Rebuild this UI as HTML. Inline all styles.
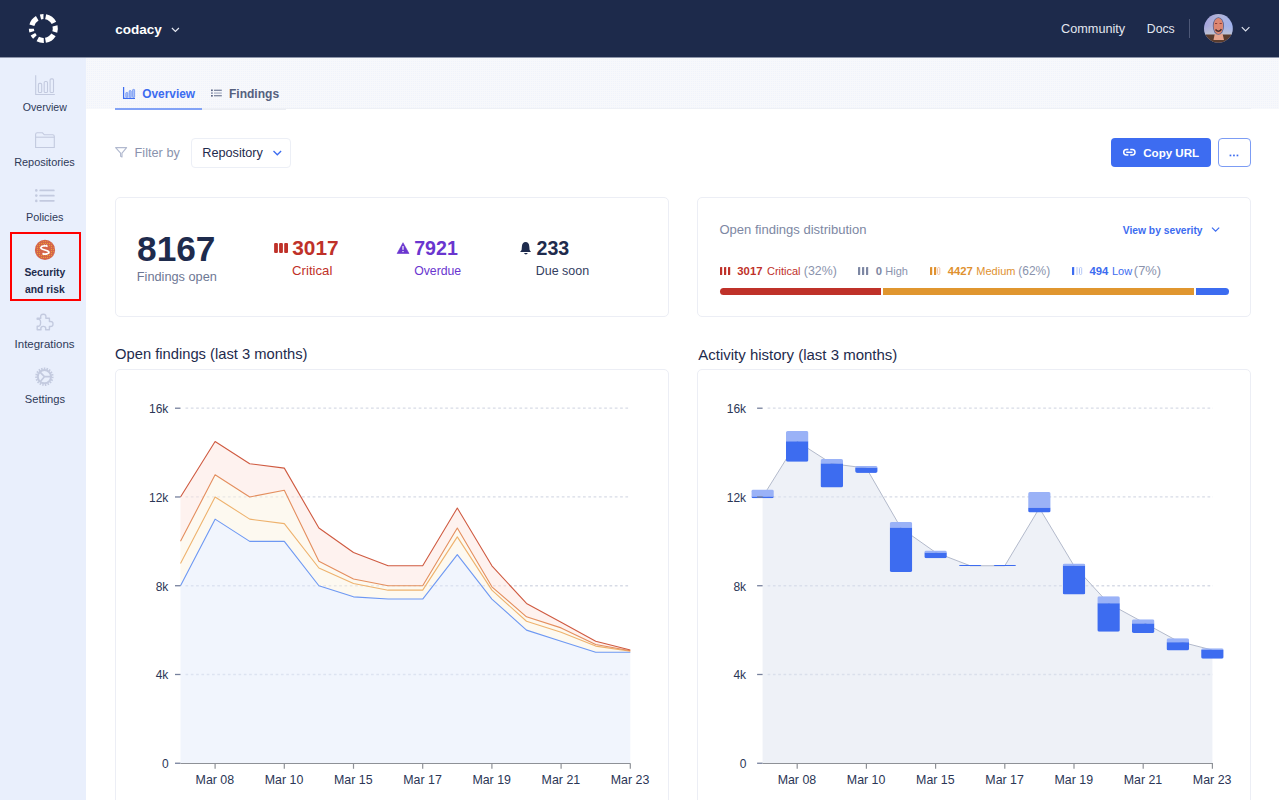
<!DOCTYPE html>
<html><head><meta charset="utf-8">
<style>
html,body{margin:0;padding:0;width:1279px;height:800px;overflow:hidden;background:#fff;font-family:"Liberation Sans",sans-serif;}
.a{position:absolute;white-space:nowrap;}
#hdr{position:absolute;left:0;top:0;width:1279px;height:57px;background:#1d2a4b;}
#side{position:absolute;left:0;top:58px;width:86px;height:742px;background:#e9effc;}
#tabs{position:absolute;left:86px;top:58px;width:1193px;height:50px;background-color:#f0f3fb;background-image:linear-gradient(90deg,#f7f8fb 1px,transparent 1px),linear-gradient(#f7f8fb 1px,transparent 1px);background-size:2px 2px;}
.card{position:absolute;border:1px solid #eceef5;border-radius:5px;background:#fff;box-sizing:border-box;}
</style></head><body>
<div id="hdr"></div><div class="a" style="left:0;top:57px;width:1279px;height:1px;background:#8d95ab;"></div>
<div id="side"></div>
<div id="tabs"></div><div class="a" style="left:86px;top:108px;width:1193px;height:1px;background:#f7f8fb;"></div><div class="a" style="left:115px;top:108px;width:1136px;height:1px;background:#eef0f5;"></div>
<svg class="a" style="left:0;top:0" width="90" height="57"><path d="M40.48 16.90A11.95 11.95 0 0 1 43.47 16.55M45.65 16.77A11.95 11.95 0 0 1 53.92 22.89M55.01 25.81A11.95 11.95 0 0 1 54.80 31.99M53.50 34.83A11.95 11.95 0 0 1 45.45 40.27M43.79 40.44A11.95 11.95 0 0 1 37.76 39.05M34.92 36.95A11.95 11.95 0 0 1 32.92 34.29M31.88 31.79A11.95 11.95 0 0 1 31.42 28.71M31.88 25.21A11.95 11.95 0 0 1 37.22 18.26" fill="none" stroke="#fff" stroke-width="5.1"/></svg>
<div class="a" style="left:115.26px;top:23px;font-size:13.53px;line-height:13.53px;font-weight:bold;color:#fff;">codacy</div>
<svg class="a" style="left:168px;top:25px" width="14" height="10"><path d="M3.9 3 L7.4 6.5 L10.9 3" fill="none" stroke="#e6e9f2" stroke-width="1.15"/></svg>
<div class="a" style="left:1061.07px;top:23px;font-size:12.69px;line-height:12.69px;font-weight:normal;color:#e3e7f0;">Community</div>
<div class="a" style="left:1146.82px;top:23px;font-size:12.24px;line-height:12.24px;font-weight:normal;color:#e3e7f0;">Docs</div>
<div class="a" style="left:1189px;top:19px;width:1px;height:19px;background:#4d5877;"></div>
<svg class="a" style="left:1204.3px;top:14px" width="29" height="29" viewBox="0 0 29 29">
<defs><clipPath id="av"><circle cx="14.4" cy="14.4" r="14.35"/></clipPath>
<linearGradient id="avg" x1="0" y1="0" x2="1" y2="0.3"><stop offset="0" stop-color="#a19fe0"/><stop offset="0.45" stop-color="#b2b4d6"/><stop offset="1" stop-color="#9fb2ee"/></linearGradient>
<linearGradient id="avg2" x1="0" y1="0" x2="0" y2="1"><stop offset="0" stop-color="#b9bdd6" stop-opacity="0"/><stop offset="1" stop-color="#bfc3d3"/></linearGradient></defs>
<g clip-path="url(#av)"><rect width="29" height="29" fill="url(#avg)"/>
<rect x="0" y="12" width="29" height="9" fill="url(#avg2)"/>
<path d="M0 20.5 L29 20.5 L29 29 L0 29Z" fill="#5a3c2e"/>
<path d="M10.8 19.5 L18.5 19.5 L20 26 L9.5 26Z" fill="#e6a48e"/>
<ellipse cx="14.4" cy="12" rx="5.6" ry="8.8" fill="#56628f"/>
<ellipse cx="14.4" cy="12" rx="4.8" ry="8" fill="#dc8670"/>
<path d="M11 9.5 H13.2 M15.6 9.5 H17.8" stroke="#8a3b35" stroke-width="1"/>
<path d="M11.5 15.5 Q14.4 19 17.5 15.2" stroke="#4b2c2c" stroke-width="1.5" fill="none"/>
</g></svg>
<svg class="a" style="left:1238px;top:24px" width="14" height="10"><path d="M3.8 3.2 L7.6 7 L11.4 3.2" fill="none" stroke="#dfe3ee" stroke-width="1.15"/></svg>
<svg class="a" style="left:30px;top:70px" width="30" height="30" viewBox="30 70 30 30" fill="none" stroke="#c3cadf" stroke-width="1">
<path d="M35.7 75.3 V94.5 H54.8" stroke-width="1.1"/><rect x="38.4" y="83.4" width="3.3" height="9.1" rx="1.1" stroke-width="1.1"/><rect x="44.2" y="81.5" width="3.3" height="11" rx="1.1" stroke-width="1.1"/><rect x="50.1" y="78.9" width="3.4" height="13.6" rx="1.1" stroke-width="1.1"/></svg>
<div class="a" style="left:22.83px;top:102px;font-size:10.55px;line-height:10.55px;font-weight:normal;color:#2e3958;">Overview</div>
<svg class="a" style="left:30px;top:128px" width="30" height="24" viewBox="30 128 30 24" fill="none" stroke="#c3cadf" stroke-width="1.1">
<path d="M35.6 147.5 V134.5 Q35.6 132.8 37.3 132.8 H42.5 L44.3 134.8 H52.6 Q54.3 134.8 54.3 136.5 V147.5 Z"/><path d="M35.6 137.2 H54.3"/></svg>
<div class="a" style="left:14.13px;top:157px;font-size:10.93px;line-height:10.93px;font-weight:normal;color:#2e3958;">Repositories</div>
<svg class="a" style="left:30px;top:184px" width="30" height="22" viewBox="30 184 30 22" fill="#c3cadf">
<circle cx="36.3" cy="190.4" r="1.3"/><circle cx="36.3" cy="195.6" r="1.3"/><circle cx="36.3" cy="200.9" r="1.3"/>
<rect x="39.3" y="189.6" width="15.4" height="1.7" rx="0.85"/><rect x="39.3" y="194.8" width="15.4" height="1.7" rx="0.85"/><rect x="39.3" y="200" width="15.4" height="1.7" rx="0.85"/></svg>
<div class="a" style="left:26.03px;top:212px;font-size:10.87px;line-height:10.87px;font-weight:normal;color:#2e3958;">Policies</div>
<div class="a" style="left:10px;top:232px;width:67px;height:65px;border:2px solid #f00;"></div>
<svg class="a" style="left:33px;top:238px" width="24" height="24" viewBox="33 238 24 24">
<defs><pattern id="sdots" x="0" y="0" width="2" height="2" patternUnits="userSpaceOnUse"><rect x="1" y="1" width="1" height="1" fill="#eda531"/></pattern></defs>
<circle cx="45" cy="249.9" r="10.1" fill="#d4644a"/>
<circle cx="45" cy="249.9" r="9" fill="url(#sdots)" fill-opacity="0.9"/>
<circle cx="45" cy="249.9" r="5.6" fill="#d4644a"/>
<path d="M47.6 246.4 Q44.6 245 41.6 246.6 Q39.6 248.2 42.6 249.3 L47.2 250.7 Q50.2 251.9 48.2 253.3 Q45.4 255 42.4 253.4" fill="none" stroke="#fff" stroke-width="1.7"/>
<path d="M44.4 244.6 V246.6 M46.6 244.6 V246.2 M43.8 252.8 V254.8 M46.2 253.2 V255" stroke="#fff" stroke-width="0.9"/>
</svg>
<div class="a" style="left:24.39px;top:268px;font-size:10.36px;line-height:10.36px;font-weight:bold;color:#1e2b4d;">Security</div>
<div class="a" style="left:24.99px;top:285px;font-size:10.37px;line-height:10.37px;font-weight:bold;color:#1e2b4d;">and risk</div>
<svg class="a" style="left:32px;top:309px" width="26" height="26" viewBox="32 309 26 26" fill="none" stroke="#c3cadf" stroke-width="1.4" stroke-linejoin="round">
<path d="M37.2 318.2 H40.8 Q40 314.2 43.3 314.2 Q46.6 314.2 45.8 318.2 H49.4 V321.6 Q53 320.8 53 324 Q53 327.2 49.4 326.4 V329.8 H45.6 Q46.4 326.4 43.3 326.4 Q40.2 326.4 41 329.8 H37.2 V326.2 Q40.6 327 40.6 322.4 Q40.6 318.6 37.2 319.2 Z"/></svg>
<div class="a" style="left:14.57px;top:339px;font-size:11.47px;line-height:11.47px;font-weight:normal;color:#2e3958;">Integrations</div>
<svg class="a" style="left:30px;top:362px" width="30" height="30" viewBox="30 362 30 30" fill="none" stroke="#c3cadf">
<circle cx="44.4" cy="376.7" r="8.2" stroke-width="2" stroke-dasharray="1.5 1.2"/>
<circle cx="44.4" cy="376.7" r="6.6" stroke-width="2"/>
<path d="M44.4 376.7 L39.8 371.8 M44.4 376.7 L50.6 376.7 M44.4 376.7 L40 382" stroke-width="1.7"/></svg>
<div class="a" style="left:24.80px;top:394px;font-size:11.17px;line-height:11.17px;font-weight:normal;color:#2e3958;">Settings</div>
<div class="a" style="left:115px;top:108.5px;width:171px;height:1.5px;background:#eceef3;"></div>
<div class="a" style="left:115px;top:108.4px;width:87px;height:1.6px;background:#83a3f6;"></div>
<svg class="a" style="left:120px;top:84px" width="18" height="18" viewBox="120 84 18 18" fill="none" stroke="#3c6cf0">
<path d="M123.6 87 V98.3 H135" stroke-width="1.25"/>
<rect x="125.8" y="92.5" width="2" height="4.8" fill="#b0c5f8" stroke="#6990f3" stroke-width="0.8" rx="0.6"/><rect x="129.2" y="90.6" width="2" height="6.7" fill="#b0c5f8" stroke="#6990f3" stroke-width="0.8" rx="0.6"/><rect x="132.6" y="89.4" width="2" height="7.9" fill="#b0c5f8" stroke="#6990f3" stroke-width="0.8" rx="0.6"/></svg>
<div class="a" style="left:142.22px;top:89px;font-size:11.90px;line-height:11.90px;font-weight:bold;color:#3c6cf0;">Overview</div>
<svg class="a" style="left:208px;top:86px" width="16" height="14" viewBox="208 86 16 14" fill="#5c6685">
<rect x="211" y="89.5" width="1.8" height="1.6"/><rect x="211" y="92.3" width="1.8" height="1.6" fill="#8a93ad"/><rect x="211" y="95" width="1.8" height="1.6"/>
<rect x="214" y="89.7" width="7.8" height="1.1" fill="#66708d"/><rect x="214" y="92.5" width="7.8" height="1.1" fill="#a0a8be"/><rect x="214" y="95.2" width="7.8" height="1.1" fill="#66708d"/></svg>
<div class="a" style="left:228.92px;top:88px;font-size:12.07px;line-height:12.07px;font-weight:bold;color:#55607e;">Findings</div>
<svg class="a" style="left:112px;top:144px" width="18" height="16" viewBox="112 144 18 16" fill="none" stroke="#b1b9cf" stroke-width="1.1" stroke-linejoin="round">
<path d="M115.6 147.6 H126.6 L122 153.2 V157 L120.6 156.2 V153.2 Z"/></svg>
<div class="a" style="left:134.58px;top:147px;font-size:12.72px;line-height:12.72px;font-weight:normal;color:#8a93ad;">Filter by</div>
<div class="card" style="left:191px;top:138px;width:100px;height:29.5px;border-radius:4px;border-color:#eceff6;"></div>
<div class="a" style="left:202.28px;top:147px;font-size:12.70px;line-height:12.70px;font-weight:normal;color:#1e2b4d;">Repository</div>
<svg class="a" style="left:270px;top:147px" width="14" height="12"><path d="M3.5 4 L7.3 7.8 L11.1 4" fill="none" stroke="#3c6cf0" stroke-width="1.3"/></svg>
<div class="a" style="left:1110.5px;top:138px;width:100px;height:28.5px;border-radius:4px;background:#3d6cf1;"></div>
<svg class="a" style="left:1120px;top:145px" width="18" height="14" viewBox="1120 145 18 14" fill="none" stroke="#fff" stroke-width="1.5">
<path d="M1128.4 149.5 H1126.3 Q1123.7 149.5 1123.7 152.3 Q1123.7 155 1126.3 155 H1128.4"/>
<path d="M1130.2 149.5 H1132.3 Q1135 149.5 1135 152.3 Q1135 155 1132.3 155 H1130.2"/>
<path d="M1126.2 152.3 H1132.5"/></svg>
<div class="a" style="left:1143.29px;top:148px;font-size:11.55px;line-height:11.55px;font-weight:bold;color:#fff;">Copy URL</div>
<div class="a" style="left:1218px;top:138.3px;width:33px;height:28.5px;box-sizing:border-box;border:1px solid #7c9cf4;border-radius:4px;"></div>
<svg class="a" style="left:1226px;top:150px" width="16" height="10" fill="#3c6cf0"><rect x="3.6" y="4.6" width="1.7" height="1.7"/><rect x="7.1" y="4.6" width="1.7" height="1.7"/><rect x="10.6" y="4.6" width="1.7" height="1.7"/></svg>
<div class="card" style="left:115px;top:197px;width:554px;height:120px;"></div>
<div class="a" style="left:137.04px;top:231px;font-size:35.27px;line-height:35.27px;font-weight:bold;color:#1e2b4d;">8167</div>
<div class="a" style="left:136.78px;top:271px;font-size:12.75px;line-height:12.75px;font-weight:normal;color:#6d7794;">Findings open</div>
<svg class="a" style="left:272px;top:240px" width="20" height="16" viewBox="272 240 20 16" fill="#bf3129"><rect x="274.1" y="242.9" width="3.8" height="10.2" rx="1"/><rect x="279.1" y="242.9" width="3.8" height="10.2" rx="1"/><rect x="284.2" y="242.9" width="3.8" height="10.2" rx="1"/></svg>
<div class="a" style="left:292.23px;top:238px;font-size:20.83px;line-height:20.83px;font-weight:bold;color:#bf3129;">3017</div>
<div class="a" style="left:292.09px;top:264px;font-size:13.18px;line-height:13.18px;font-weight:normal;color:#bf3129;">Critical</div>
<svg class="a" style="left:395px;top:240px" width="16" height="16" viewBox="395 240 16 16">
<path d="M403 242.7 L409 253.5 H397.1 Z" fill="#6a35cf" stroke="#6a35cf" stroke-width="0.6" stroke-linejoin="round"/>
<rect x="402.3" y="246" width="1.4" height="3.8" fill="#e4e0f2"/><rect x="402.3" y="251" width="1.4" height="1.1" fill="#e4e0f2"/></svg>
<div class="a" style="left:414.22px;top:239px;font-size:19.58px;line-height:19.58px;font-weight:bold;color:#6a35cf;">7921</div>
<div class="a" style="left:414.15px;top:265px;font-size:12.28px;line-height:12.28px;font-weight:normal;color:#6a35cf;">Overdue</div>
<svg class="a" style="left:518px;top:240px" width="16" height="16" viewBox="518 240 16 16" fill="#1e2b4d">
<path d="M525.6 242 Q529 242.2 529.3 246.5 L529.6 250 L531 251.9 H520.1 L521.6 250 L521.9 246.5 Q522.2 242.2 525.6 242 Z"/>
<path d="M524 253 H527.8 Q527.2 254.4 525.9 254.4 Q524.6 254.4 524 253 Z"/></svg>
<div class="a" style="left:536.51px;top:239px;font-size:19.62px;line-height:19.62px;font-weight:bold;color:#1e2b4d;">233</div>
<div class="a" style="left:535.70px;top:265px;font-size:12.48px;line-height:12.48px;font-weight:normal;color:#33405f;">Due soon</div>
<div class="card" style="left:697px;top:197px;width:554px;height:120px;"></div>
<div class="a" style="left:719.41px;top:223px;font-size:13.04px;line-height:13.04px;font-weight:normal;color:#7d87a3;">Open findings distribution</div>
<div class="a" style="left:1122.75px;top:226px;font-size:10.29px;line-height:10.29px;font-weight:bold;color:#3c6cf0;">View by severity</div>
<svg class="a" style="left:1208px;top:224px" width="14" height="12"><path d="M4 3.6 L7.6 7.2 L11.2 3.6" fill="none" stroke="#3c6cf0" stroke-width="1.2"/></svg>
<svg class="a" style="left:718px;top:265px" width="14" height="12" viewBox="718 265 14 12" fill="#bf3129"><rect x="720" y="267" width="2.2" height="8" rx="0.6"/><rect x="724" y="267" width="2.2" height="8" rx="0.6"/><rect x="728" y="267" width="2.2" height="8" rx="0.6"/></svg>
<div class="a" style="left:737.32px;top:266px;font-size:11.30px;line-height:11.30px;font-weight:bold;color:#bf3129;">3017</div>
<div class="a" style="left:766.95px;top:266px;font-size:11.00px;line-height:11.00px;font-weight:normal;color:#bf3129;">Critical</div>
<div class="a" style="left:803.86px;top:265px;font-size:12.34px;line-height:12.34px;font-weight:normal;color:#8a93ad;">(32%)</div>
<svg class="a" style="left:856px;top:265px" width="14" height="12" viewBox="856 265 14 12" fill="#7d87a3"><rect x="858" y="267" width="2.2" height="8" rx="0.6"/><rect x="862" y="267" width="2.2" height="8" rx="0.6"/><rect x="866" y="267" width="2.2" height="8" rx="0.6"/></svg>
<div class="a" style="left:875.85px;top:266px;font-size:11.30px;line-height:11.30px;font-weight:bold;color:#7d87a3;">0</div>
<div class="a" style="left:885.32px;top:266px;font-size:11.00px;line-height:11.00px;font-weight:normal;color:#8a93ad;">High</div>
<svg class="a" style="left:927px;top:265px" width="14" height="12" viewBox="927 265 14 12"><rect x="930" y="267" width="2.2" height="8" rx="0.6" fill="#e0912f"/><rect x="934" y="267" width="2.2" height="8" rx="0.6" fill="#e0912f"/><rect x="937.6" y="267.5" width="2.2" height="7" rx="1" fill="none" stroke="#f0c0a6" stroke-width="1"/></svg>
<div class="a" style="left:947.63px;top:266px;font-size:11.30px;line-height:11.30px;font-weight:bold;color:#e0912f;">4427</div>
<div class="a" style="left:976.32px;top:266px;font-size:11.00px;line-height:11.00px;font-weight:normal;color:#e0912f;">Medium</div>
<div class="a" style="left:1018.28px;top:266px;font-size:11.94px;line-height:11.94px;font-weight:normal;color:#8a93ad;">(62%)</div>
<svg class="a" style="left:1069px;top:265px" width="14" height="12" viewBox="1069 265 14 12"><rect x="1072" y="267" width="2.2" height="8" rx="0.6" fill="#3c6cf0"/><rect x="1076" y="267" width="2.2" height="8" fill="#dde5f9"/><rect x="1079.5" y="267.5" width="2.2" height="7" rx="1" fill="none" stroke="#b5c8f7" stroke-width="1"/></svg>
<div class="a" style="left:1089.53px;top:266px;font-size:11.30px;line-height:11.30px;font-weight:bold;color:#3c6cf0;">494</div>
<div class="a" style="left:1111.92px;top:266px;font-size:11.00px;line-height:11.00px;font-weight:normal;color:#3c6cf0;">Low</div>
<div class="a" style="left:1133.83px;top:265px;font-size:12.91px;line-height:12.91px;font-weight:normal;color:#8a93ad;">(7%)</div>
<div class="a" style="left:719.5px;top:287.6px;width:161.5px;height:7px;background:#bf3129;border-radius:3.5px 0 0 3.5px;"></div>
<div class="a" style="left:882.6px;top:287.6px;width:311.2px;height:7px;background:#e0962f;"></div>
<div class="a" style="left:1195.5px;top:287.6px;width:33.8px;height:7px;background:#3c6cf0;border-radius:0 3.5px 3.5px 0;"></div>
<div class="a" style="left:115.04px;top:347px;font-size:14.74px;line-height:14.74px;font-weight:normal;color:#1e2b4d;">Open findings (last 3 months)</div>
<div class="a" style="left:698.30px;top:347px;font-size:14.99px;line-height:14.99px;font-weight:normal;color:#1e2b4d;">Activity history (last 3 months)</div>
<div class="card" style="left:115px;top:369px;width:554px;height:460px;"></div>
<div class="card" style="left:697px;top:369px;width:554px;height:460px;"></div>
<svg class="a" style="left:0;top:0" width="1279" height="800"><line x1="185.5" y1="408.21" x2="630.5" y2="408.21" stroke="#d7dbe6" stroke-width="1.3" stroke-dasharray="2.7 2.6"/><line x1="185.5" y1="496.97" x2="630.5" y2="496.97" stroke="#d7dbe6" stroke-width="1.3" stroke-dasharray="2.7 2.6"/><line x1="185.5" y1="585.73" x2="630.5" y2="585.73" stroke="#d7dbe6" stroke-width="1.3" stroke-dasharray="2.7 2.6"/><line x1="185.5" y1="674.49" x2="630.5" y2="674.49" stroke="#d7dbe6" stroke-width="1.3" stroke-dasharray="2.7 2.6"/><polygon points="180.50,496.97 215.10,441.50 249.70,463.69 284.30,468.12 318.90,528.04 353.50,552.44 388.10,565.76 422.70,565.76 457.30,508.06 491.90,565.76 526.50,603.48 561.10,622.34 595.70,641.21 630.30,650.08 630.30,650.75 595.70,644.53 561.10,627.89 526.50,616.80 491.90,586.84 457.30,528.04 422.70,585.73 388.10,585.73 353.50,579.07 318.90,561.32 284.30,490.31 249.70,496.97 215.10,474.78 180.50,541.35" fill="#fde5df" fill-opacity="0.5"/><polygon points="180.50,541.35 215.10,474.78 249.70,496.97 284.30,490.31 318.90,561.32 353.50,579.07 388.10,585.73 422.70,585.73 457.30,528.04 491.90,586.84 526.50,616.80 561.10,627.89 595.70,644.53 630.30,650.75 630.30,651.19 595.70,646.09 561.10,632.33 526.50,621.23 491.90,590.17 457.30,536.91 422.70,590.17 388.10,590.17 353.50,583.51 318.90,567.98 284.30,523.60 249.70,519.16 215.10,496.97 180.50,563.54" fill="#fbf3e1" fill-opacity="0.5"/><polygon points="180.50,563.54 215.10,496.97 249.70,519.16 284.30,523.60 318.90,567.98 353.50,583.51 388.10,590.17 422.70,590.17 457.30,536.91 491.90,590.17 526.50,621.23 561.10,632.33 595.70,646.09 630.30,651.19 630.30,652.30 595.70,652.30 561.10,641.21 526.50,630.11 491.90,599.04 457.30,554.66 422.70,599.04 388.10,599.04 353.50,596.83 318.90,585.73 284.30,541.35 249.70,541.35 215.10,519.16 180.50,585.73" fill="#fbf3e1" fill-opacity="0.5"/><polygon points="180.50,585.73 215.10,519.16 249.70,541.35 284.30,541.35 318.90,585.73 353.50,596.83 388.10,599.04 422.70,599.04 457.30,554.66 491.90,599.04 526.50,630.11 561.10,641.21 595.70,652.30 630.30,652.30 630.30,763.25 595.70,763.25 561.10,763.25 526.50,763.25 491.90,763.25 457.30,763.25 422.70,763.25 388.10,763.25 353.50,763.25 318.90,763.25 284.30,763.25 249.70,763.25 215.10,763.25 180.50,763.25" fill="#e3ebfb" fill-opacity="0.5"/><polyline points="180.50,585.73 215.10,519.16 249.70,541.35 284.30,541.35 318.90,585.73 353.50,596.83 388.10,599.04 422.70,599.04 457.30,554.66 491.90,599.04 526.50,630.11 561.10,641.21 595.70,652.30 630.30,652.30" fill="none" stroke="#6d98f3" stroke-width="1.1" stroke-linejoin="round"/><polyline points="180.50,563.54 215.10,496.97 249.70,519.16 284.30,523.60 318.90,567.98 353.50,583.51 388.10,590.17 422.70,590.17 457.30,536.91 491.90,590.17 526.50,621.23 561.10,632.33 595.70,646.09 630.30,651.19" fill="none" stroke="#eeb26d" stroke-width="1.1" stroke-linejoin="round"/><polyline points="180.50,541.35 215.10,474.78 249.70,496.97 284.30,490.31 318.90,561.32 353.50,579.07 388.10,585.73 422.70,585.73 457.30,528.04 491.90,586.84 526.50,616.80 561.10,627.89 595.70,644.53 630.30,650.75" fill="none" stroke="#e48e5e" stroke-width="1.1" stroke-linejoin="round"/><polyline points="180.50,496.97 215.10,441.50 249.70,463.69 284.30,468.12 318.90,528.04 353.50,552.44 388.10,565.76 422.70,565.76 457.30,508.06 491.90,565.76 526.50,603.48 561.10,622.34 595.70,641.21 630.30,650.08" fill="none" stroke="#cf5a40" stroke-width="1.1" stroke-linejoin="round"/><line x1="175.0" y1="408.21" x2="180.5" y2="408.21" stroke="#76809c" stroke-width="1.3"/><line x1="175.0" y1="496.97" x2="180.5" y2="496.97" stroke="#76809c" stroke-width="1.3"/><line x1="175.0" y1="585.73" x2="180.5" y2="585.73" stroke="#76809c" stroke-width="1.3"/><line x1="175.0" y1="674.49" x2="180.5" y2="674.49" stroke="#76809c" stroke-width="1.3"/><line x1="175.0" y1="763.25" x2="180.5" y2="763.25" stroke="#76809c" stroke-width="1.3"/><line x1="180.5" y1="763.5" x2="630.5" y2="763.5" stroke="#8e9197" stroke-width="1.1"/><line x1="215.10" y1="763.5" x2="215.10" y2="768.8" stroke="#8e9197" stroke-width="1.2"/><line x1="284.30" y1="763.5" x2="284.30" y2="768.8" stroke="#8e9197" stroke-width="1.2"/><line x1="353.50" y1="763.5" x2="353.50" y2="768.8" stroke="#8e9197" stroke-width="1.2"/><line x1="422.70" y1="763.5" x2="422.70" y2="768.8" stroke="#8e9197" stroke-width="1.2"/><line x1="491.90" y1="763.5" x2="491.90" y2="768.8" stroke="#8e9197" stroke-width="1.2"/><line x1="561.10" y1="763.5" x2="561.10" y2="768.8" stroke="#8e9197" stroke-width="1.2"/><line x1="630.30" y1="763.5" x2="630.30" y2="768.8" stroke="#8e9197" stroke-width="1.2"/><line x1="767.6" y1="408.21" x2="1213" y2="408.21" stroke="#d7dbe6" stroke-width="1.3" stroke-dasharray="2.7 2.6"/><line x1="767.6" y1="496.97" x2="1213" y2="496.97" stroke="#d7dbe6" stroke-width="1.3" stroke-dasharray="2.7 2.6"/><line x1="767.6" y1="585.73" x2="1213" y2="585.73" stroke="#d7dbe6" stroke-width="1.3" stroke-dasharray="2.7 2.6"/><line x1="767.6" y1="674.49" x2="1213" y2="674.49" stroke="#d7dbe6" stroke-width="1.3" stroke-dasharray="2.7 2.6"/><polygon points="762.60,496.97 797.20,441.50 831.80,463.69 866.40,468.12 901.00,528.04 935.60,552.44 970.20,565.76 1004.80,565.76 1039.40,508.06 1074.00,565.76 1108.60,603.48 1143.20,622.34 1177.80,641.21 1212.40,650.08 1212.40,763.25 1177.80,763.25 1143.20,763.25 1108.60,763.25 1074.00,763.25 1039.40,763.25 1004.80,763.25 970.20,763.25 935.60,763.25 901.00,763.25 866.40,763.25 831.80,763.25 797.20,763.25 762.60,763.25" fill="#dde3ef" fill-opacity="0.5"/><polyline points="762.60,496.97 797.20,441.50 831.80,463.69 866.40,468.12 901.00,528.04 935.60,552.44 970.20,565.76 1004.80,565.76 1039.40,508.06 1074.00,565.76 1108.60,603.48 1143.20,622.34 1177.80,641.21 1212.40,650.08" fill="none" stroke="#b3bacb" stroke-width="1" stroke-linejoin="round"/><defs><clipPath id="bc0"><rect x="751.35" y="489.5" width="22.5" height="8.80" rx="1.8"/></clipPath><clipPath id="bc1"><rect x="785.95" y="431" width="22.5" height="30.80" rx="1.8"/></clipPath><clipPath id="bc2"><rect x="820.55" y="459" width="22.5" height="28.50" rx="1.8"/></clipPath><clipPath id="bc3"><rect x="855.15" y="466" width="22.5" height="6.90" rx="1.8"/></clipPath><clipPath id="bc4"><rect x="889.75" y="522" width="22.5" height="50.00" rx="1.8"/></clipPath><clipPath id="bc5"><rect x="924.35" y="550.5" width="22.5" height="7.80" rx="1.8"/></clipPath><clipPath id="bc6"><rect x="958.95" y="565" width="22.5" height="1.00" rx="1.8"/></clipPath><clipPath id="bc7"><rect x="993.55" y="565" width="22.5" height="1.00" rx="1.8"/></clipPath><clipPath id="bc8"><rect x="1028.15" y="492" width="22.5" height="20.50" rx="1.8"/></clipPath><clipPath id="bc9"><rect x="1062.75" y="563.5" width="22.5" height="31.00" rx="1.8"/></clipPath><clipPath id="bc10"><rect x="1097.35" y="596.2" width="22.5" height="35.55" rx="1.8"/></clipPath><clipPath id="bc11"><rect x="1131.95" y="619.3" width="22.5" height="13.70" rx="1.8"/></clipPath><clipPath id="bc12"><rect x="1166.55" y="638.2" width="22.5" height="12.30" rx="1.8"/></clipPath><clipPath id="bc13"><rect x="1201.15" y="648.25" width="22.5" height="10.50" rx="1.8"/></clipPath></defs><g clip-path="url(#bc0)"><rect x="751.35" y="489.5" width="22.5" height="7.10" fill="#9ab2f7"/><rect x="751.35" y="496.6" width="22.5" height="1.70" fill="#3d6cf0"/></g><g clip-path="url(#bc1)"><rect x="785.95" y="431" width="22.5" height="10.30" fill="#9ab2f7"/><rect x="785.95" y="441.3" width="22.5" height="20.50" fill="#3d6cf0"/></g><g clip-path="url(#bc2)"><rect x="820.55" y="459" width="22.5" height="4.50" fill="#9ab2f7"/><rect x="820.55" y="463.5" width="22.5" height="24.00" fill="#3d6cf0"/></g><g clip-path="url(#bc3)"><rect x="855.15" y="466" width="22.5" height="1.80" fill="#9ab2f7"/><rect x="855.15" y="467.8" width="22.5" height="5.10" fill="#3d6cf0"/></g><g clip-path="url(#bc4)"><rect x="889.75" y="522" width="22.5" height="5.70" fill="#9ab2f7"/><rect x="889.75" y="527.7" width="22.5" height="44.30" fill="#3d6cf0"/></g><g clip-path="url(#bc5)"><rect x="924.35" y="550.5" width="22.5" height="2.25" fill="#9ab2f7"/><rect x="924.35" y="552.75" width="22.5" height="5.55" fill="#3d6cf0"/></g><g clip-path="url(#bc6)"><rect x="958.95" y="565" width="22.5" height="0.00" fill="#9ab2f7"/><rect x="958.95" y="565" width="22.5" height="1.00" fill="#3d6cf0"/></g><g clip-path="url(#bc7)"><rect x="993.55" y="565" width="22.5" height="0.00" fill="#9ab2f7"/><rect x="993.55" y="565" width="22.5" height="1.00" fill="#3d6cf0"/></g><g clip-path="url(#bc8)"><rect x="1028.15" y="492" width="22.5" height="15.75" fill="#9ab2f7"/><rect x="1028.15" y="507.75" width="22.5" height="4.75" fill="#3d6cf0"/></g><g clip-path="url(#bc9)"><rect x="1062.75" y="563.5" width="22.5" height="2.25" fill="#9ab2f7"/><rect x="1062.75" y="565.75" width="22.5" height="28.75" fill="#3d6cf0"/></g><g clip-path="url(#bc10)"><rect x="1097.35" y="596.2" width="22.5" height="7.05" fill="#9ab2f7"/><rect x="1097.35" y="603.25" width="22.5" height="28.50" fill="#3d6cf0"/></g><g clip-path="url(#bc11)"><rect x="1131.95" y="619.3" width="22.5" height="4.20" fill="#9ab2f7"/><rect x="1131.95" y="623.5" width="22.5" height="9.50" fill="#3d6cf0"/></g><g clip-path="url(#bc12)"><rect x="1166.55" y="638.2" width="22.5" height="4.05" fill="#9ab2f7"/><rect x="1166.55" y="642.25" width="22.5" height="8.25" fill="#3d6cf0"/></g><g clip-path="url(#bc13)"><rect x="1201.15" y="648.25" width="22.5" height="1.50" fill="#9ab2f7"/><rect x="1201.15" y="649.75" width="22.5" height="9.00" fill="#3d6cf0"/></g><line x1="757.1" y1="408.21" x2="762.6" y2="408.21" stroke="#76809c" stroke-width="1.3"/><line x1="757.1" y1="496.97" x2="762.6" y2="496.97" stroke="#76809c" stroke-width="1.3"/><line x1="757.1" y1="585.73" x2="762.6" y2="585.73" stroke="#76809c" stroke-width="1.3"/><line x1="757.1" y1="674.49" x2="762.6" y2="674.49" stroke="#76809c" stroke-width="1.3"/><line x1="757.1" y1="763.25" x2="762.6" y2="763.25" stroke="#76809c" stroke-width="1.3"/><line x1="762.6" y1="763.5" x2="1213" y2="763.5" stroke="#8e9197" stroke-width="1.1"/><line x1="797.20" y1="763.5" x2="797.20" y2="768.8" stroke="#8e9197" stroke-width="1.2"/><line x1="866.40" y1="763.5" x2="866.40" y2="768.8" stroke="#8e9197" stroke-width="1.2"/><line x1="935.60" y1="763.5" x2="935.60" y2="768.8" stroke="#8e9197" stroke-width="1.2"/><line x1="1004.80" y1="763.5" x2="1004.80" y2="768.8" stroke="#8e9197" stroke-width="1.2"/><line x1="1074.00" y1="763.5" x2="1074.00" y2="768.8" stroke="#8e9197" stroke-width="1.2"/><line x1="1143.20" y1="763.5" x2="1143.20" y2="768.8" stroke="#8e9197" stroke-width="1.2"/><line x1="1212.40" y1="763.5" x2="1212.40" y2="768.8" stroke="#8e9197" stroke-width="1.2"/></svg>
<div class="a" style="left:148.98px;top:403px;font-size:12.00px;line-height:12.00px;font-weight:normal;color:#2b3656;">16k</div>
<div class="a" style="left:726.78px;top:403px;font-size:12.00px;line-height:12.00px;font-weight:normal;color:#2b3656;">16k</div>
<div class="a" style="left:148.98px;top:492px;font-size:12.00px;line-height:12.00px;font-weight:normal;color:#2b3656;">12k</div>
<div class="a" style="left:726.78px;top:492px;font-size:12.00px;line-height:12.00px;font-weight:normal;color:#2b3656;">12k</div>
<div class="a" style="left:155.64px;top:581px;font-size:12.00px;line-height:12.00px;font-weight:normal;color:#2b3656;">8k</div>
<div class="a" style="left:733.44px;top:581px;font-size:12.00px;line-height:12.00px;font-weight:normal;color:#2b3656;">8k</div>
<div class="a" style="left:155.64px;top:669px;font-size:12.00px;line-height:12.00px;font-weight:normal;color:#2b3656;">4k</div>
<div class="a" style="left:733.44px;top:669px;font-size:12.00px;line-height:12.00px;font-weight:normal;color:#2b3656;">4k</div>
<div class="a" style="left:162.06px;top:758px;font-size:12.00px;line-height:12.00px;font-weight:normal;color:#2b3656;">0</div>
<div class="a" style="left:739.86px;top:758px;font-size:12.00px;line-height:12.00px;font-weight:normal;color:#2b3656;">0</div>
<div class="a" style="left:195.57px;top:774px;font-size:12.40px;line-height:12.40px;font-weight:normal;color:#2b3656;">Mar 08</div>
<div class="a" style="left:777.67px;top:774px;font-size:12.40px;line-height:12.40px;font-weight:normal;color:#2b3656;">Mar 08</div>
<div class="a" style="left:264.74px;top:774px;font-size:12.40px;line-height:12.40px;font-weight:normal;color:#2b3656;">Mar 10</div>
<div class="a" style="left:846.84px;top:774px;font-size:12.40px;line-height:12.40px;font-weight:normal;color:#2b3656;">Mar 10</div>
<div class="a" style="left:333.97px;top:774px;font-size:12.40px;line-height:12.40px;font-weight:normal;color:#2b3656;">Mar 15</div>
<div class="a" style="left:916.07px;top:774px;font-size:12.40px;line-height:12.40px;font-weight:normal;color:#2b3656;">Mar 15</div>
<div class="a" style="left:403.23px;top:774px;font-size:12.40px;line-height:12.40px;font-weight:normal;color:#2b3656;">Mar 17</div>
<div class="a" style="left:985.33px;top:774px;font-size:12.40px;line-height:12.40px;font-weight:normal;color:#2b3656;">Mar 17</div>
<div class="a" style="left:472.40px;top:774px;font-size:12.40px;line-height:12.40px;font-weight:normal;color:#2b3656;">Mar 19</div>
<div class="a" style="left:1054.50px;top:774px;font-size:12.40px;line-height:12.40px;font-weight:normal;color:#2b3656;">Mar 19</div>
<div class="a" style="left:541.60px;top:774px;font-size:12.40px;line-height:12.40px;font-weight:normal;color:#2b3656;">Mar 21</div>
<div class="a" style="left:1123.70px;top:774px;font-size:12.40px;line-height:12.40px;font-weight:normal;color:#2b3656;">Mar 21</div>
<div class="a" style="left:610.77px;top:774px;font-size:12.40px;line-height:12.40px;font-weight:normal;color:#2b3656;">Mar 23</div>
<div class="a" style="left:1192.87px;top:774px;font-size:12.40px;line-height:12.40px;font-weight:normal;color:#2b3656;">Mar 23</div>
</body></html>
